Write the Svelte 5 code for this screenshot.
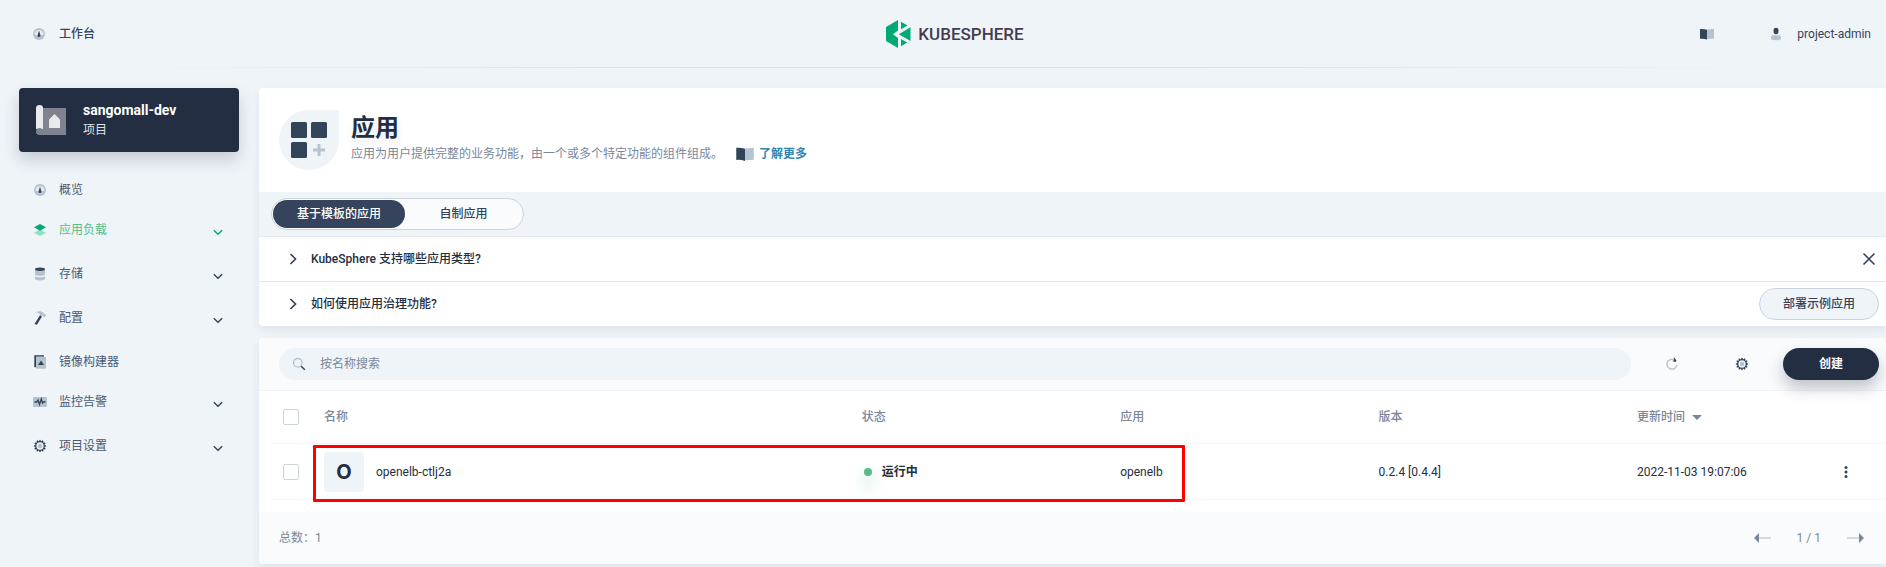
<script>
  const nav = [
    { label: '概览', icon: 'gauge' },
    { label: '应用负载', icon: 'layers', sub: true, active: true },
    { label: '存储', icon: 'database', sub: true },
    { label: '配置', icon: 'hammer', sub: true },
    { label: '镜像构建器', icon: 'image' },
    { label: '监控告警', icon: 'monitor', sub: true },
    { label: '项目设置', icon: 'gear', sub: true }
  ];
  const faqs = ['KubeSphere 支持哪些应用类型?', '如何使用应用治理功能?'];
  const teeth = Array.from({ length: 12 }, (_, i) => i * 30);
</script>

{#snippet icon(name)}
  <svg class="icon" viewBox="0 0 16 16" width="16" height="16" aria-hidden="true">
    {#if name === 'gauge'}
      <circle cx="8" cy="8" r="6" fill="#b6c2cd" />
      <path d="M3.4 8.6a4.6 4.6 0 1 1 9.2 0l-2.4.6H5.8z" fill="#e6ecf2" />
      <path d="M8 4.6 9.3 9a1.4 1.4 0 1 1-2.6 0z" fill="#324558" />
    {:else if name === 'layers'}
      <path d="M2 10.8 8 7.5l6 3.3L8 14z" fill="#90e0c5" />
      <path d="M2 5.3 8 2l6 3.3-6 3.4z" fill="#00aa72" />
    {:else if name === 'database'}
      <path d="M3 3.5v4.7c0 .9 2.2 1.6 5 1.6s5-.7 5-1.6V3.5zM3 10.2v2.600c0 1 2.200 1.700 5 1.700s5-.7 5-1.700v-2.600c-1 .7-3 1-5 1s-4-.3-5-1z" fill="#b6c2cd" />
      <ellipse cx="8" cy="3.2" rx="5" ry="1.7" fill="#324558" />
    {:else if name === 'hammer'}
      <path d="M4 2.3C7 .8 9.7 1 11.5 3l2.7 2.2-1.5 2-2.1-1.4-2.3-.3C8 3.6 6.600 2.700 4 2.300z" fill="#b6c2cd" />
      <path d="M8 5.300 10 6.400 4.900 14.800 2.500 14z" fill="#324558" />
    {:else if name === 'image'}
      <path d="M2.300 1.200H12v1.500H4v10.500H2.300z" fill="#324558" />
      <rect x="4" y="2.700" width="10" height="12" rx=".8" fill="#b6c2cd" />
      <path d="M9 6.500 12 11H6z" fill="#324558" />
    {:else if name === 'monitor'}
      <rect x="1" y="3" width="14" height="10" rx="1" fill="#b6c2cd" />
      <path d="M2.500 8h2.300l1.200-2 1.500 4.500L9.300 5l1.200 4 .8-1h2.200" fill="none" stroke="#324558" stroke-width="1.300" />
    {:else if name === 'gear'}
      {#each teeth as t}
        <rect x="7.300" y="1.900" width="1.400" height="2" fill="#324558" transform={`rotate(${t} 8 8)`} />
      {/each}
      <circle cx="8" cy="8" r="4.300" fill="#eff4f9" stroke="#324558" stroke-width="1.300" />
      <circle cx="8" cy="8" r="2.200" fill="#b6c2cd" />
    {:else if name === 'book'}
      <path d="M8 3.500 15 3v9.500L8 13z" fill="#b6c2cd" />
      <path d="M1 3q4-.3 7 .7v9.800q-3-1-7-.8z" fill="#324558" />
    {:else if name === 'user'}
      <path d="M3 13v-1.500Q3 9.300 5.500 9.300h5q2.500 0 2.500 2.200V13q-1 1.200-5 1.200T3 13z" fill="#b6c2cd" />
      <ellipse cx="8" cy="5" rx="2.500" ry="3.300" fill="#324558" />
    {:else if name === 'search'}
      <circle cx="6.800" cy="6.800" r="4.300" fill="none" stroke="#b6c2cd" stroke-width="1.300" />
      <path d="m10.200 10.200 3.600 3.600" stroke="#324558" stroke-width="1.500" />
    {:else if name === 'refresh'}
      <path d="M9.500 3.400A5 5 0 1 0 12.900 9" fill="none" stroke="#b6c2cd" stroke-width="1.400" />
      <path d="M8.800 5.200V4.600h1.100V1.200l2.600 3.400-1 1.400z" fill="#324558" />
    {:else if name === 'down'}
      <path d="m3.800 6.200 4.200 4 4.200-4" fill="none" stroke="currentColor" stroke-width="1.400" />
    {:else if name === 'right'}
      <path d="m5.500 3 5 5-5 5" fill="none" stroke="currentColor" stroke-width="1.700" />
    {:else if name === 'close'}
      <path d="m2.500 2.500 11 11m0-11-11 11" fill="none" stroke="currentColor" stroke-width="1.600" />
    {:else if name === 'more'}
      <circle cx="8" cy="3.500" r="1.500" fill="#324558" />
      <circle cx="8" cy="8" r="1.500" fill="#324558" />
      <circle cx="8" cy="12.500" r="1.500" fill="#324558" />
    {/if}
  </svg>
{/snippet}

<div class="page">
  <header>
    <a class="workbench" href="#workbench">{@render icon('gauge')}<span>工作台</span></a>
    <a class="logo" href="#home">
      <svg viewBox="0 0 25 28" width="25" height="28" aria-hidden="true">
        <path d="M12 0v10.500L7 14.300l5 3.700v10L0 21V7z" fill="#00aa72" />
        <path d="M15 1.800 21.500 5.500 15 9.300zM24.500 7.200v13.800L12.800 14.300zM15 19l6.200 3.600L15 26.300z" fill="#00aa72" />
      </svg>
      <span>KUBESPHERE</span>
    </a>
    <div class="account">
      <button class="bare" aria-label="文档">{@render icon('book')}</button>
      <button class="bare user">{@render icon('user')}<span>project-admin</span></button>
    </div>
  </header>

  <div class="body">
    <aside>
      <div class="project">
        <svg viewBox="0 0 32 32" width="32" height="32" aria-hidden="true">
          <path d="M5 4h26v27H5z" fill="#7e838f" />
          <path d="M1 4q0-3 3.500-3T8 4v21H1z" fill="#e9eaec" />
          <ellipse cx="4.500" cy="27.500" rx="3.500" ry="3.500" fill="#7e838f" />
          <path d="M19.500 10 25 15.500V24H14v-8.500z" fill="#e9eaec" />
        </svg>
        <div>
          <strong>sangomall-dev</strong>
          <p>项目</p>
        </div>
      </div>
      <nav>
        {#each nav as item}
          <a href="#nav" class:sub={item.sub} class:active={item.active}>
            {@render icon(item.icon)}
            <span>{item.label}</span>
            {#if item.sub}<i>{@render icon('down')}</i>{/if}
          </a>
        {/each}
      </nav>
    </aside>

    <main>
      <section class="panel">
        <div class="banner">
          <div class="leaf">
            <svg viewBox="0 0 40 40" width="40" height="40" aria-hidden="true">
              <rect x="2" y="2" width="16" height="16" rx="1.500" fill="#324558" />
              <rect x="22" y="2" width="16" height="16" rx="1.500" fill="#324558" />
              <rect x="2" y="22" width="16" height="16" rx="1.500" fill="#324558" />
              <path d="M28.500 24h3v4.500H36v3h-4.500V36h-3v-4.500H24v-3h4.500z" fill="#b6c2cd" />
            </svg>
          </div>
          <div class="intro">
            <h1>应用</h1>
            <p class="desc">
              <span>应用为用户提供完整的业务功能，由一个或多个特定功能的组件组成。</span>
              <a href="#docs">{@render icon('book')}了解更多</a>
            </p>
          </div>
        </div>
        <div class="tabbar">
          <div class="tabs">
            <button class="on">基于模板的应用</button>
            <button>自制应用</button>
          </div>
        </div>
        {#each faqs as q, i}
          <div class="faq">
            <button class="bare question">{@render icon('right')}<span>{q}</span></button>
            {#if i === 0}
              <button class="bare close" aria-label="关闭">{@render icon('close')}</button>
            {:else}
              <button class="pill">部署示例应用</button>
            {/if}
          </div>
        {/each}
      </section>

      <section class="panel">
        <div class="toolbar">
          <label class="search">
            {@render icon('search')}
            <input type="text" placeholder="按名称搜索" aria-label="按名称搜索" />
          </label>
          <div class="tools">
            <button class="bare" aria-label="刷新">{@render icon('refresh')}</button>
            <button class="bare" aria-label="设置">{@render icon('gear')}</button>
          </div>
          <button class="create">创建</button>
        </div>
        <div class="list">
          <table>
            <thead>
              <tr>
                <th class="check"><input type="checkbox" aria-label="全选" /></th>
                <th class="name">名称</th>
                <th>状态</th>
                <th>应用</th>
                <th>版本</th>
                <th class="time">更新时间<svg class="caret" viewBox="0 0 10 6" width="10" height="6" aria-hidden="true"><path d="M0 0h10L5 5z" fill="#79879c" /></svg></th>
                <th class="menu"></th>
              </tr>
            </thead>
            <tbody>
              <tr>
                <td class="check"><input type="checkbox" aria-label="选择 openelb-ctlj2a" /></td>
                <td><div class="app"><span class="avatar">O</span><span>openelb-ctlj2a</span></div></td>
                <td><div class="status"><span class="dot"></span>运行中</div></td>
                <td>openelb</td>
                <td>0.2.4 [0.4.4]</td>
                <td>2022-11-03 19:07:06</td>
                <td class="menu"><button class="bare" aria-label="更多">{@render icon('more')}</button></td>
              </tr>
            </tbody>
          </table>
          <div class="highlight"></div>
        </div>
        <footer>
          <span>总数：1</span>
          <div class="pager">
            <button class="bare" aria-label="上一页">
              <svg viewBox="0 0 20 12" width="20" height="12" aria-hidden="true"><path d="M6 5h13v2H6z" fill="#d3dbe2" /><path d="M2 6 7 1v10z" fill="#79879c" /></svg>
            </button>
            <span>1 / 1</span>
            <button class="bare" aria-label="下一页">
              <svg viewBox="0 0 20 12" width="20" height="12" aria-hidden="true"><path d="M1 5h13v2H1z" fill="#d3dbe2" /><path d="m18 6-5-5v10z" fill="#79879c" /></svg>
            </button>
          </div>
        </footer>
      </section>
    </main>
  </div>
</div>

<style>
  :global(body) {
    background: #eff4f9;
  }
  .page {
    font: 400 12px/20px Roboto, "Noto Sans CJK SC", sans-serif;
    color: #242e42;
  }
  .page * {
    box-sizing: border-box;
  }
  h1,
  p {
    margin: 0;
  }
  a {
    color: inherit;
    text-decoration: none;
  }
  button,
  input {
    font: inherit;
    color: inherit;
  }
  .icon {
    display: block;
    flex: none;
  }
  .bare {
    display: flex;
    align-items: center;
    padding: 0;
    border: 0;
    background: none;
  }

  header {
    display: grid;
    grid-template-columns: 1fr auto 1fr;
    align-items: center;
    height: 68px;
    padding: 0 15px 0 31px;
    background: linear-gradient(90deg, transparent 5%, #d8dfe6 40%, #d8dfe6 60%, transparent 95%) bottom / 100% 1px no-repeat;
  }
  .workbench {
    display: flex;
    align-items: center;
    gap: 12px;
    font-weight: 500;
    color: #36435c;
  }
  .logo {
    display: flex;
    align-items: center;
    gap: 7px;
    padding-left: 8px;
    font-size: 17px;
    font-weight: 500;
    color: #443d4e;
  }
  .account {
    display: flex;
    justify-content: flex-end;
    gap: 53px;
    color: #36435c;
  }
  .user {
    gap: 13px;
  }

  .body {
    display: flex;
    gap: 20px;
    padding: 20px 0 0 19px;
  }
  aside {
    flex: none;
    width: 220px;
  }
  .project {
    display: flex;
    align-items: center;
    gap: 16px;
    height: 64px;
    padding: 0 16px;
    border-radius: 4px;
    background: #242e42;
    box-shadow: 0 8px 16px rgba(36, 46, 66, 0.2);
    color: #dfe3e8;
  }
  .project strong {
    display: block;
    font-size: 14px;
    color: #fff;
  }
  nav {
    padding-top: 18px;
    color: #4a5974;
  }
  nav a {
    display: flex;
    align-items: center;
    gap: 11px;
    height: 40px;
    padding: 0 13px;
  }
  nav a.sub {
    height: 44px;
    padding-bottom: 4px;
  }
  nav a.active {
    color: #55bc8a;
  }
  nav i {
    margin-left: auto;
    padding-top: 4px;
    color: #324558;
  }
  nav .active i {
    color: #00aa72;
  }

  main {
    flex: 1;
    min-width: 0;
    display: grid;
    gap: 12px;
    padding-bottom: 3px;
  }
  .panel {
    overflow: hidden;
    border-radius: 4px 0 0 4px;
    background: #fff;
    box-shadow: 0 4px 8px rgba(36, 46, 66, 0.08);
  }
  .banner {
    display: flex;
    align-items: flex-start;
    gap: 12px;
    height: 104px;
    padding: 22px 20px;
  }
  .leaf {
    display: grid;
    place-items: center;
    width: 60px;
    height: 60px;
    border-radius: 30px 0 30px 30px;
    background: #eff4f9;
  }
  .intro {
    padding-top: 2px;
  }
  h1 {
    font-size: 24px;
    line-height: 32px;
    font-weight: 700;
    text-shadow: 0 4px 8px rgba(36, 46, 66, 0.1);
  }
  .desc {
    display: flex;
    gap: 12px;
    color: #79879c;
  }
  .desc a {
    display: flex;
    align-items: center;
    gap: 4px;
    font-weight: 700;
    color: #3385b0;
  }
  .desc .icon {
    width: 20px;
    height: 20px;
  }
  .tabbar {
    display: flex;
    padding: 6px 12px;
    background: #eff4f9;
  }
  .tabs {
    display: flex;
    padding: 1px;
    border: 1px solid #ccd3db;
    border-radius: 16px;
    background: #f9fbfd;
  }
  .tabs button {
    min-width: 117px;
    height: 28px;
    padding: 0 24px;
    border: 0;
    border-radius: 14px;
    background: none;
    color: #36435c;
    font-weight: 500;
  }
  .tabs .on {
    background: #36435c;
    color: #fff;
  }
  .faq {
    display: flex;
    align-items: center;
    justify-content: space-between;
    height: 45px;
    padding: 0 7px 0 26px;
    border-top: 1px solid #e3e9ef;
  }
  .question {
    gap: 10px;
    font-weight: 500;
  }
  .question .icon,
  .close {
    color: #36435c;
  }
  .close {
    padding: 0 2px;
  }
  .pill {
    height: 32px;
    padding: 0 23px;
    border: 1px solid #ccd3db;
    border-radius: 16px;
    background: #eff4f9;
    color: #36435c;
    font-weight: 500;
  }

  .toolbar {
    display: flex;
    gap: 6px;
    padding: 10px 7px 10px 20px;
    border-bottom: 1px solid #eff4f9;
    background: #f9fbfd;
  }
  .search {
    flex: 1;
    display: flex;
    align-items: center;
    gap: 13px;
    height: 32px;
    padding: 0 12px;
    border-radius: 16px;
    background: #eff4f9;
  }
  .search input {
    flex: 1;
    padding: 0;
    border: 0;
    outline: 0;
    background: none;
  }
  .search input::placeholder {
    color: #79879c;
    opacity: 1;
  }
  .tools {
    display: flex;
  }
  .tools button {
    justify-content: center;
    width: 70px;
  }
  .create {
    width: 96px;
    height: 32px;
    border: 0;
    border-radius: 16px;
    background: #242e42;
    box-shadow: 0 8px 16px rgba(36, 46, 66, 0.28);
    color: #fff;
    font-weight: 700;
  }

  .list {
    position: relative;
    margin-left: 12px;
    padding-bottom: 12px;
  }
  table {
    width: 100%;
    table-layout: fixed;
    border-spacing: 0;
  }
  th,
  td {
    width: 16%;
    padding: 0;
    border-bottom: 1px solid #eff4f9;
    text-align: left;
  }
  th {
    height: 53px;
    color: #79879c;
    font-weight: 500;
  }
  td {
    height: 56px;
  }
  .check {
    width: 53px;
    padding-left: 12px;
  }
  .name {
    width: 33.3%;
  }
  .time {
    width: auto;
  }
  .menu {
    width: 48px;
  }
  .check input {
    display: block;
    appearance: none;
    width: 16px;
    height: 16px;
    margin: 0;
    border: 1px solid #ccd3db;
    border-radius: 2px;
    background: #fff;
  }
  .caret {
    margin-left: 7px;
    vertical-align: middle;
  }
  .app {
    display: flex;
    align-items: center;
    gap: 12px;
  }
  .avatar {
    width: 40px;
    border-radius: 4px;
    background: #eff4f9;
    font-family: Inter, sans-serif;
    font-size: 20px;
    line-height: 40px;
    font-weight: 700;
    text-align: center;
  }
  .status {
    display: flex;
    align-items: center;
    gap: 10px;
    padding-left: 2px;
    font-weight: 700;
  }
  .dot {
    width: 8px;
    height: 8px;
    border-radius: 50%;
    background: #55bc8a;
    box-shadow: 0 8px 16px 2px rgba(85, 188, 138, 0.36);
  }
  .highlight {
    position: absolute;
    top: 54px;
    left: 42px;
    width: 54%;
    height: 57px;
    border: 3px solid #f00;
    border-radius: 1px;
    pointer-events: none;
  }
  footer {
    display: flex;
    align-items: center;
    justify-content: space-between;
    height: 52px;
    padding: 0 20px;
    background: #f9fbfd;
    color: #79879c;
  }
  .pager {
    display: flex;
    align-items: center;
    gap: 25px;
  }
</style>
